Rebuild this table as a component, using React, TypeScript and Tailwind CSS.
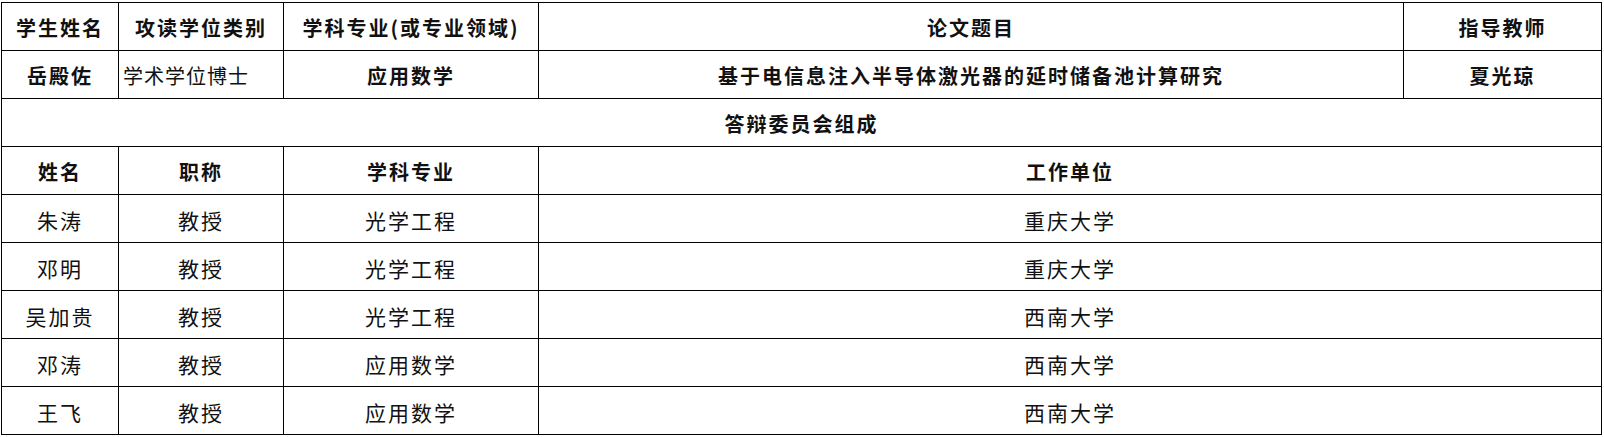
const members = [
  { name: "朱涛", title: "教授", major: "光学工程", unit: "重庆大学" },
  { name: "邓明", title: "教授", major: "光学工程", unit: "重庆大学" },
  { name: "吴加贵", title: "教授", major: "光学工程", unit: "西南大学" },
  { name: "邓涛", title: "教授", major: "应用数学", unit: "西南大学" },
  { name: "王飞", title: "教授", major: "应用数学", unit: "西南大学" },
];

function Cell({
  children,
  bold = false,
  left = false,
  wide = false,
  span = "",
}: {
  children: React.ReactNode;
  bold?: boolean;
  left?: boolean;
  wide?: boolean;
  span?: string;
}) {
  return (
    <div
      className={`flex items-center bg-white pt-[3px] text-[#111] ${
        left ? "justify-start pl-[4px]" : "justify-center"
      } ${
        bold
          ? "text-[20px] font-semibold tracking-[2px]"
          : wide
            ? "text-[21px] font-normal tracking-[2px]"
            : "text-[20px] font-normal tracking-[1px]"
      } ${span}`}
    >
      {children}
    </div>
  );
}

export default function App() {
  return (
    <div
      className="min-h-[437px] w-[1604px] bg-white pt-[2px] pl-[1px]"
      style={{ fontFamily: '"Noto Sans CJK SC", "Noto Sans", sans-serif' }}
    >
      <div className="grid w-[1601px] grid-cols-[116px_164px_254px_864px_197px] auto-rows-[47px] gap-px border border-black bg-black leading-none">
        <Cell bold>学生姓名</Cell>
        <Cell bold>攻读学位类别</Cell>
        <Cell bold>学科专业(或专业领域)</Cell>
        <Cell bold>论文题目</Cell>
        <Cell bold>指导教师</Cell>

        <Cell bold>岳殿佐</Cell>
        <Cell left>学术学位博士</Cell>
        <Cell bold>应用数学</Cell>
        <Cell bold>基于电信息注入半导体激光器的延时储备池计算研究</Cell>
        <Cell bold>夏光琼</Cell>

        <Cell bold span="col-span-5">
          答辩委员会组成
        </Cell>

        <Cell bold>姓名</Cell>
        <Cell bold>职称</Cell>
        <Cell bold>学科专业</Cell>
        <Cell bold span="col-span-2">
          工作单位
        </Cell>

        {members.map((m) => (
          <div key={m.name} className="contents">
            <Cell wide>{m.name}</Cell>
            <Cell wide>{m.title}</Cell>
            <Cell wide>{m.major}</Cell>
            <Cell wide span="col-span-2">
              {m.unit}
            </Cell>
          </div>
        ))}
      </div>
    </div>
  );
}
